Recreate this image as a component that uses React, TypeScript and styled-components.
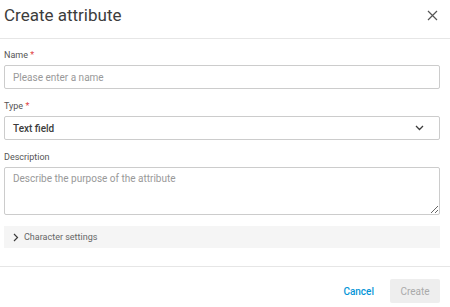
import styled, { createGlobalStyle } from "styled-components";

const GlobalStyle = createGlobalStyle`
  html, body {
    margin: 0;
    padding: 0;
    background: #ffffff;
    font-family: Roboto, "Liberation Sans", sans-serif;
  }
  * {
    box-sizing: border-box;
  }
`;

function CloseIcon() {
  return (
    <svg width='11' height='11' viewBox='0 0 11 11' fill='none'>
      <path d='M1 1L10 10M10 1L1 10' stroke='#555' strokeWidth='1.2' />
    </svg>
  );
}

function ChevronDown() {
  return (
    <svg width='9' height='6' viewBox='0 0 9 6' fill='none'>
      <path d='M1 1L4.5 4.5L8 1' stroke='#3c3c3c' strokeWidth='1.3' />
    </svg>
  );
}

function ChevronRight() {
  return (
    <svg width='6' height='9' viewBox='0 0 6 9' fill='none'>
      <path d='M1 1L4.5 4.5L1 8' stroke='#3c3c3c' strokeWidth='1.2' />
    </svg>
  );
}

export default function App() {
  return (
    <>
      <GlobalStyle />
      <Dialog>
        <Header>
          <Title>Create attribute</Title>
          <CloseButton aria-label='Close'>
            <CloseIcon />
          </CloseButton>
        </Header>

        <Form>
          <Field>
            <Label>
              Name <Required>*</Required>
            </Label>
            <TextInput placeholder='Please enter a name' />
          </Field>

          <Field>
            <Label>
              Type <Required>*</Required>
            </Label>
            <SelectBox>
              <span>Text field</span>
              <ChevronDown />
            </SelectBox>
          </Field>

          <Field>
            <Label>Description</Label>
            <TextArea placeholder='Describe the purpose of the attribute' />
          </Field>

          <Accordion>
            <ChevronRight />
            <span>Character settings</span>
          </Accordion>
        </Form>

        <Footer>
          <LinkButton>Cancel</LinkButton>
          <PrimaryButton disabled>Create</PrimaryButton>
        </Footer>
      </Dialog>
    </>
  );
}

const Dialog = styled.div`
  width: 450px;
  height: 307px;
  display: flex;
  flex-direction: column;
  background: #fff;
  color: #3c3c3c;
`;

const Header = styled.div`
  display: flex;
  align-items: center;
  justify-content: space-between;
  height: 39px;
  padding: 0 12px 8px 4px;
  border-bottom: 1px solid #e6e6e6;
`;

const Title = styled.h1`
  margin: 0;
  font-size: 17px;
  font-weight: 400;
  color: #3c3c3c;
`;

const CloseButton = styled.button`
  display: flex;
  align-items: center;
  justify-content: center;
  padding: 0;
  border: none;
  background: none;
`;

const Form = styled.div`
  display: flex;
  flex-direction: column;
  gap: 10px;
  padding: 9px 10px 0 4px;
`;

const Field = styled.div`
  display: flex;
  flex-direction: column;
  gap: 3px;
`;

const Label = styled.label`
  font-size: 9px;
  line-height: 14px;
  font-weight: 400;
  color: #555;
`;

const Required = styled.span`
  color: #e04444;
`;

const TextInput = styled.input`
  height: 24px;
  padding: 0 8px;
  border: 1px solid #cccccc;
  border-radius: 2px;
  font-family: inherit;
  font-size: 10px;
  color: #3c3c3c;
  outline: none;

  &::placeholder {
    color: #999;
  }
`;

const SelectBox = styled.div`
  display: flex;
  align-items: center;
  justify-content: space-between;
  height: 24px;
  padding: 0 15px 0 8px;
  border: 1px solid #cccccc;
  border-radius: 2px;
  font-size: 10px;
  font-weight: 500;
  color: #3c3c3c;
`;

const TextArea = styled.textarea`
  height: 48px;
  padding: 5px 8px;
  border: 1px solid #cccccc;
  border-radius: 2px;
  font-family: inherit;
  font-size: 10px;
  color: #3c3c3c;
  outline: none;

  &::placeholder {
    color: #999;
  }
`;

const Accordion = styled.div`
  display: flex;
  align-items: center;
  gap: 5px;
  height: 22px;
  margin-top: 1px;
  padding-left: 9px;
  background: #f5f5f5;
  font-size: 9px;
  font-weight: 400;
  color: #666;
`;

const Footer = styled.div`
  display: flex;
  align-items: center;
  justify-content: flex-end;
  gap: 16px;
  margin-top: auto;
  padding: 12px 10px 4px 0;
  border-top: 1px solid #e6e6e6;
`;

const LinkButton = styled.button`
  padding: 0;
  border: none;
  background: none;
  font-family: inherit;
  font-size: 10px;
  font-weight: 500;
  color: #0696d7;
`;

const PrimaryButton = styled.button`
  width: 50px;
  height: 24px;
  border: none;
  border-radius: 2px;
  background: #eeeeee;
  font-family: inherit;
  font-size: 10px;
  font-weight: 400;
  color: #aaaaaa;
`;
